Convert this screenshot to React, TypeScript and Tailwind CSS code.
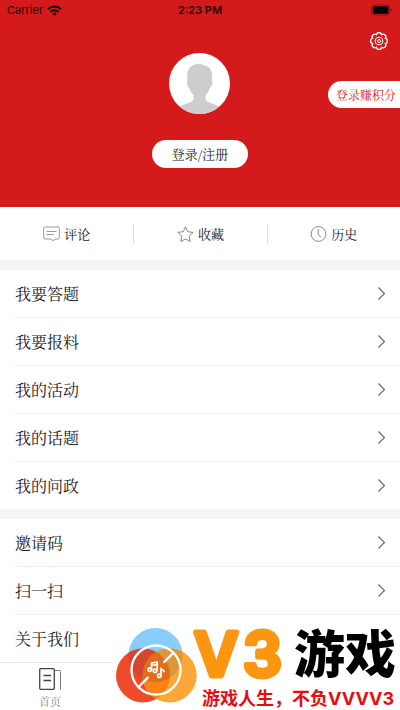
import type { ReactNode } from "react";

const serif =
  "font-['Noto_Serif_CJK_SC','Noto_Serif_SC','Source_Han_Serif_SC','Noto_Sans_CJK_SC',serif]";

function StatusBar() {
  return (
    <div className="grid h-5 grid-cols-3 items-center px-[7px] font-['Inter','Liberation_Sans',sans-serif] text-[11px] leading-5 text-[#250404]">
      <div className="flex items-center gap-1">
        <span>Carrier</span>
        <svg width="15" height="11" viewBox="0 0 15 11" fill="none" stroke="#1a0303" strokeWidth="2">
          <path d="M1 4.2a9.3 9.3 0 0 1 13 0" />
          <path d="M3.4 6.8a5.9 5.9 0 0 1 8.2 0" />
          <path d="M7.5 10.8 5.2 8.5a3.3 3.3 0 0 1 4.6 0Z" fill="#1a0303" stroke="none" />
        </svg>
      </div>
      <span className="text-center font-semibold">2:23 PM</span>
      <svg className="justify-self-end" width="22" height="12" viewBox="0 0 24 12">
        <rect x="0.5" y="0.5" width="20" height="11" rx="3" fill="none" stroke="#8d1010" />
        <rect x="2" y="2" width="17" height="8" rx="1.5" fill="#000" />
        <path d="M22 4v4c1.8-.6 1.8-3.4 0-4Z" fill="#8d1010" />
      </svg>
    </div>
  );
}

function GearIcon() {
  return (
    <svg width="18" height="18" viewBox="0 0 18 18" fill="none" stroke="#fff" strokeWidth="1.400" strokeLinejoin="round">
      <path d="M6.400 2.720A2.640 2.640 0 0 1 11.600 2.720A2.640 2.640 0 0 1 15.280 6.400A2.640 2.640 0 0 1 15.280 11.600A2.640 2.640 0 0 1 11.600 15.280A2.640 2.640 0 0 1 6.400 15.280A2.640 2.640 0 0 1 2.720 11.600A2.640 2.640 0 0 1 2.720 6.400A2.640 2.640 0 0 1 6.400 2.720Z" />
      <circle cx="9" cy="9" r="3.8" strokeWidth="1.1" />
      <circle cx="9" cy="9" r="1.5" strokeWidth="1" />
    </svg>
  );
}

function Avatar() {
  return (
    <svg width="61" height="61" viewBox="0 0 61 61">
      <defs>
        <clipPath id="avatar-clip">
          <circle cx="30.5" cy="30.5" r="30.5" />
        </clipPath>
      </defs>
      <circle cx="30.5" cy="30.5" r="30.5" fill="#fff" />
      <path
        clipPath="url(#avatar-clip)"
        fill="#cdcdcd"
        d="M18.500 28c-1-8 .5-13.500 5.500-15.700 3-1.600 8-2 10.500-.3 1 .9 2.200.6 3.500 1.300 5 2.500 5.800 7.700 4.700 14.700 1.200.2.800 3-.3 5.200-.8 1.400-1.500 1.400-1.700 1.800-.7 3-2 5-4.200 7v4.500c1.200 3.500 11 4.500 15.500 8.500V61H9v-6c4-4 14.500-5 15.500-8.500V42c-2-2-3.500-4-4.200-7-.8-.3-1.200-1-1.800-2.200-1-2-1.200-4.600 0-4.800Z"
      />
    </svg>
  );
}

function Header() {
  return (
    <header className="h-[207px] bg-[#d41a1a]">
      <StatusBar />
      <div className="grid grid-cols-[1fr_auto_1fr]">
        <div className="col-start-2 flex flex-col items-center gap-[26px] pt-[33px]">
          <Avatar />
          <button className="h-7 rounded-full bg-white px-5 text-[13px] leading-7 text-[#222]">
            登录/注册
          </button>
        </div>
        <div className="flex flex-col items-end pt-3">
          <button aria-label="设置" className="mr-3">
            <GearIcon />
          </button>
          <button className="mt-[31px] h-[27px] rounded-l-full bg-white pr-1 pl-2 text-xs leading-[27px] text-[#d41a1a]">
            登录赚积分
          </button>
        </div>
      </div>
    </header>
  );
}

const shortcuts: { label: string; icon: ReactNode }[] = [
  {
    label: "评论",
    icon: (
      <svg width="17" height="16" viewBox="0 0 17 16" fill="none" stroke="#999" strokeWidth="1">
        <path d="M2 1h13a1.300 1.300 0 0 1 1.300 1.300v9.400a1.300 1.300 0 0 1-1.300 1.300h-3l-1.800 2-1.800-2H2A1.300 1.300 0 0 1 .7 11.700V2.300A1.300 1.300 0 0 1 2 1ZM3.500 5.500h10M3.500 8.500h7" />
      </svg>
    ),
  },
  {
    label: "收藏",
    icon: (
      <svg width="17" height="16" viewBox="0 0 17 16" fill="none" stroke="#888" strokeWidth="1" strokeLinejoin="round">
        <path d="m8.500.8 2.200 4.900 5.500.7-4 3.700 1 5.400-4.700-2.600-4.700 2.600 1-5.400-4-3.700 5.500-.7Z" />
      </svg>
    ),
  },
  {
    label: "历史",
    icon: (
      <svg width="17" height="16" viewBox="0 0 17 16" fill="none" stroke="#888" strokeWidth="1">
        <circle cx="8.500" cy="8" r="7.400" />
        <path d="M8.200 3v5.300l2.800 3" />
      </svg>
    ),
  },
];

function Shortcuts() {
  return (
    <div className="grid h-[53px] grid-cols-3 items-center bg-white">
      {shortcuts.map((item, i) => (
        <button
          key={item.label}
          className={`flex h-5 items-center justify-center gap-1 text-[13px] leading-5 text-[#222] ${i > 0 ? "border-l border-[#ddd]" : ""}`}
        >
          {item.icon}
          {item.label}
        </button>
      ))}
    </div>
  );
}

function MenuGroup({ items }: { items: string[] }) {
  return (
    <ul className="border-t-10 border-[#f5f5f5] bg-white pl-[15px]">
      {items.map((label) => (
        <li key={label} className="border-b border-[#eee] last:border-b-0">
          <a href="#" className="flex h-[47px] items-center justify-between pr-[15px] text-base text-[#222]">
            {label}
            <svg width="7" height="13" viewBox="0 0 7 13" fill="none" stroke="#666" strokeWidth="1.200">
              <path d="m.5.5 6 6-6 6" />
            </svg>
          </a>
        </li>
      ))}
    </ul>
  );
}

function BottomNav() {
  return (
    <nav className="mt-auto grid h-12 grid-cols-4 border-t border-[#e8e8e8] bg-white">
      <a href="#" className="flex flex-col items-center pt-[5px] text-[11px] leading-4 text-[#888]">
        <svg className="mb-[3px]" width="22" height="22" viewBox="0 0 22 22" fill="none" stroke="#444" strokeWidth="1.300">
          <rect x="0.700" y="0.700" width="14.600" height="20.600" rx="1" />
          <path d="M4.500 7.500h7.500M4.500 12.500h7.500" />
          <path d="M16 2.500h4.500a1 1 0 0 1 1 1v18" stroke="#777" strokeWidth="1" />
        </svg>
        首页
      </a>
    </nav>
  );
}

function DiscLogo() {
  return (
    <g>
      <defs>
        <clipPath id="blue-disc">
          <circle cx="155.500" cy="655" r="27" />
        </clipPath>
        <clipPath id="red-disc">
          <circle cx="143" cy="675.500" r="27" />
        </clipPath>
      </defs>
      <circle cx="155.500" cy="655" r="27" fill="#87cefa" />
      <circle cx="143" cy="675.500" r="27" fill="#ee4b2b" />
      <circle cx="169.700" cy="675.500" r="27" fill="#fba838" />
      <circle cx="143" cy="675.500" r="27" fill="#d2472e" clipPath="url(#blue-disc)" />
      <circle cx="169.700" cy="675.500" r="27" fill="#dd9638" clipPath="url(#blue-disc)" />
      <circle cx="169.700" cy="675.500" r="27" fill="#f98414" clipPath="url(#red-disc)" />
      <g clipPath="url(#red-disc)">
        <circle cx="169.700" cy="675.500" r="27" fill="#de6d1c" clipPath="url(#blue-disc)" />
      </g>
      <g fill="none" stroke="#fff" strokeWidth="2.300">
        <circle cx="156" cy="670" r="24.500" />
        <path d="m139 686.500 9.500-9.500M163.500 662.800l9.500-9.500" />
        <g strokeWidth="1.700" strokeLinejoin="round" strokeLinecap="round">
          <circle cx="149.800" cy="669.600" r="1.700" />
          <circle cx="155" cy="670.800" r="1.700" />
          <path d="M151.500 669.500v-6.500l5.700-.8v8.300M151.500 665.500l5.700-.8" />
          <circle cx="159.300" cy="675.700" r="1.700" />
          <path d="M161 675.700v-7.300c.6 1.600 2.700 1.200 2.900 3.200" />
        </g>
      </g>
    </g>
  );
}

function Brand() {
  return (
    <div className="absolute right-0 bottom-0 h-[83px] w-[288px] bg-white">
      <svg className="block overflow-visible" width="288" height="83" viewBox="112 627 288 83">
        <DiscLogo />
        <text
          x="194 243"
          y="676"
          fontSize="61"
          fontWeight="600"
          fill="#fa960f"
          stroke="#fa960f"
          strokeWidth="5"
          strokeLinejoin="round"
          className="font-['Inter',sans-serif]"
        >
          V3
        </text>
        <text
          x="294"
          y="673"
          fontSize="51"
          fontWeight="900"
          fill="#000"
          className="font-['Noto_Sans_CJK_SC',sans-serif]"
        >
          游戏
        </text>
        <text
          x="202"
          y="705"
          fontSize="18"
          fontWeight="700"
          fill="#e60d0d"
          className="font-['Inter','Noto_Sans_CJK_SC',sans-serif]"
        >
          游戏人生，不负VVVV3
        </text>
      </svg>
    </div>
  );
}

export default function App() {
  return (
    <div className={`relative flex min-h-screen flex-col bg-white ${serif}`}>
      <Header />
      <Shortcuts />
      <MenuGroup items={["我要答题", "我要报料", "我的活动", "我的话题", "我的问政"]} />
      <MenuGroup items={["邀请码", "扫一扫", "关于我们"]} />
      <BottomNav />
      <Brand />
    </div>
  );
}
